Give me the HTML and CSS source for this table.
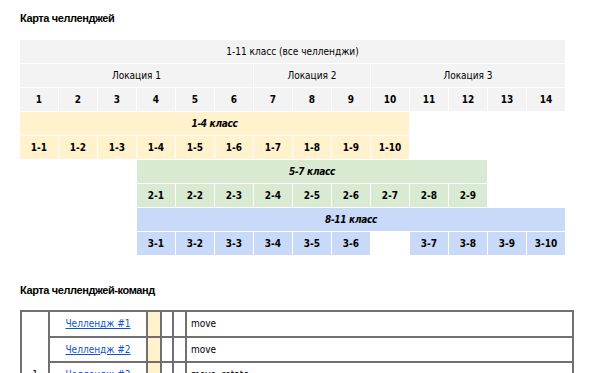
FILE: index.html
```html
<!DOCTYPE html>
<html lang="ru">
<head>
<meta charset="utf-8">
<title>Карта челленджей</title>
<link rel="stylesheet" href="styles.css">
</head>
<body>
<div class="page">
  <h2 class="title">Карта челленджей</h2>
  <div class="map">
    <div class="cell gray span14">1-11 класс (все челленджи)</div>
    <div class="cell gray span6">Локация 1</div>
    <div class="cell gray span3">Локация 2</div>
    <div class="cell gray span5">Локация 3</div>
    <div class="cell gray num">1</div><div class="cell gray num">2</div><div class="cell gray num">3</div><div class="cell gray num">4</div><div class="cell gray num">5</div><div class="cell gray num">6</div><div class="cell gray num">7</div><div class="cell gray num">8</div><div class="cell gray num">9</div><div class="cell gray num">10</div><div class="cell gray num">11</div><div class="cell gray num">12</div><div class="cell gray num">13</div><div class="cell gray num">14</div>

    <div class="cell yellow group span10">1-4 класс</div>
    <div class="cell yellow num c1">1-1</div><div class="cell yellow num">1-2</div><div class="cell yellow num">1-3</div><div class="cell yellow num">1-4</div><div class="cell yellow num">1-5</div><div class="cell yellow num">1-6</div><div class="cell yellow num">1-7</div><div class="cell yellow num">1-8</div><div class="cell yellow num">1-9</div><div class="cell yellow num">1-10</div>

    <div class="cell green group c4 span9">5-7 класс</div>
    <div class="cell green num c4">2-1</div><div class="cell green num">2-2</div><div class="cell green num">2-3</div><div class="cell green num">2-4</div><div class="cell green num">2-5</div><div class="cell green num">2-6</div><div class="cell green num">2-7</div><div class="cell green num">2-8</div><div class="cell green num">2-9</div>

    <div class="cell blue group c4 span11">8-11 класс</div>
    <div class="cell blue num c4">3-1</div><div class="cell blue num">3-2</div><div class="cell blue num">3-3</div><div class="cell blue num">3-4</div><div class="cell blue num">3-5</div><div class="cell blue num">3-6</div><div class="cell blue num c11">3-7</div><div class="cell blue num">3-8</div><div class="cell blue num">3-9</div><div class="cell blue num">3-10</div>
  </div>

  <h2 class="title title2">Карта челленджей-команд</h2>
  <table class="teams">
    <colgroup>
      <col class="w1"><col class="w2"><col class="w3"><col class="w4"><col class="w5"><col>
    </colgroup>
    <tr>
      <td class="center" rowspan="5">1</td>
      <td class="center"><a href="#">Челлендж #1</a></td>
      <td class="ycol"></td><td></td><td></td>
      <td class="cmd">move</td>
    </tr>
    <tr>
      <td class="center"><a href="#">Челлендж #2</a></td>
      <td class="ycol"></td><td></td><td></td>
      <td class="cmd">move</td>
    </tr>
    <tr>
      <td class="center"><a href="#">Челлендж #3</a></td>
      <td class="ycol"></td><td></td><td></td>
      <td class="cmd">move, rotate</td>
    </tr>
    <tr>
      <td class="center"><a href="#">Челлендж #4</a></td>
      <td class="ycol"></td><td></td><td></td>
      <td class="cmd">move, rotate</td>
    </tr>
    <tr>
      <td class="center"><a href="#">Челлендж #5</a></td>
      <td class="ycol"></td><td></td><td></td>
      <td class="cmd">move, rotate</td>
    </tr>
  </table>
</div>
</body>
</html>
```
FILE: styles.css
```css
html, body {
  margin: 0;
  padding: 0;
  background: #ffffff;
}
body {
  font-family: "DejaVu Sans Condensed", "DejaVu Sans", sans-serif;
  font-size: 10px;
  color: #000;
}
.page {
  padding: 11px 20px 0 20px;
}
.title {
  font-family: "Liberation Sans", Arial, sans-serif;
  font-weight: bold;
  font-size: 11px;
  letter-spacing: -0.4px;
  line-height: 14px;
  margin: 0 0 15px 0;
}
.title2 {
  margin-top: 28px;
  margin-bottom: 13px;
}
.map {
  display: grid;
  grid-template-columns: repeat(14, 38px);
  grid-auto-rows: 23px;
  gap: 1px;
}
.cell {
  display: flex;
  align-items: center;
  justify-content: center;
  white-space: nowrap;
}
.num { font-weight: bold; }
.group { font-style: italic; font-weight: bold; letter-spacing: -0.3px; }
.gray { background: #f3f3f3; }
.yellow { background: #fff2cc; }
.green { background: #d9ead3; }
.blue { background: #c9daf8; }
.span14 { grid-column: 1 / span 14; }
.span6 { grid-column: span 6; }
.span3 { grid-column: span 3; }
.span5 { grid-column: span 5; }
.span10 { grid-column: 1 / span 10; }
.c1 { grid-column-start: 1; }
.c4 { grid-column-start: 4; }
.c11 { grid-column-start: 11; }
.c4.span9 { grid-column: 4 / span 9; }
.c4.span11 { grid-column: 4 / span 11; }

.teams {
  border-collapse: collapse;
  width: 554px;
  table-layout: fixed;
  border: 2px solid #707070;
}
.teams td {
  border: 2px solid #707070;
  height: 23.5px;
  padding: 0;
}
.w1 { width: 28px; }
.w2 { width: 98px; }
.w3 { width: 14px; }
.w4 { width: 12px; }
.w5 { width: 13px; }
.teams .center { text-align: center; }
.teams .ycol { background: #fff2cc; }
.teams .cmd { padding-left: 4px; }
.teams a { color: #1155cc; text-decoration: underline; }
```
